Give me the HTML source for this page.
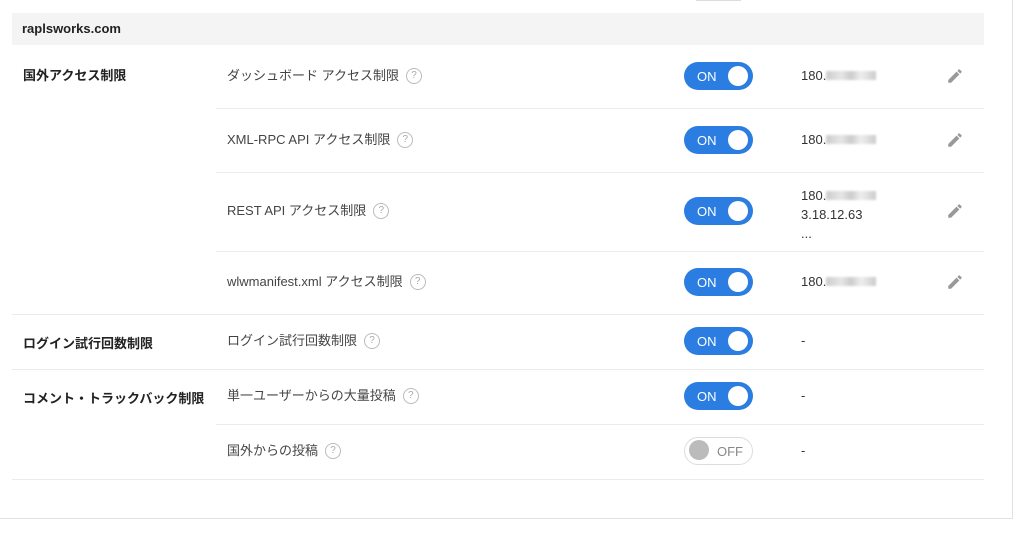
<!DOCTYPE html><html><head><meta charset="utf-8"><style>
body{margin:0;width:1024px;height:544px;background:#fff;font-family:"Liberation Sans","Noto Sans CJK JP",sans-serif;color:#333;position:relative;overflow:hidden}
.a{position:absolute}
.card{left:-2px;top:-2px;width:1014px;height:520px;border-right:1px solid #e2e2e2;border-bottom:1px solid #e2e2e2}
.hd{left:12px;top:13px;width:972px;height:32px;background:#f4f4f4;font-size:13px;font-weight:bold;line-height:32px;text-indent:10px;color:#222}
.ln{height:1px;background:#ebebeb}
.g{font-size:13px;font-weight:bold;left:23px;color:#222}
.l{font-size:13px;left:227px;color:#444;white-space:nowrap;line-height:18px}
.q{display:inline-block;width:14px;height:14px;border:1px solid #bbb;border-radius:50%;font-size:10px;line-height:14px;text-align:center;color:#aaa;margin-left:7px;vertical-align:middle;position:relative;top:-1px}
.t{left:684px;width:69px;height:28px;border-radius:14px;background:#2b7de1;color:#fff;font-size:13px}
.t span{position:absolute;left:13px;top:7px}
.t i{position:absolute;right:5px;top:4px;width:20px;height:20px;border-radius:50%;background:#fff}
.off{background:#fff;border:1px solid #ddd;width:67px;height:26px;color:#888}
.off i{left:4px;top:2px;background:#bbb}
.off span{left:32px;top:6px}
.ip{left:801px;font-size:13px;color:#333;white-space:nowrap}
.bl{display:inline-block;width:50px;height:9px;background:linear-gradient(90deg,#ccc,#e6e6e6 30%,#ccc 50%,#eee 70%,#ccc);filter:blur(1px);vertical-align:0}
.p{left:946px}
</style></head><body>
<div class="a card"></div>
<div class="a ln" style="left:696px;top:0;width:45px;background:#ddd"></div>
<div class="a hd">raplsworks.com</div>
<div class="a g" style="top:65px">国外アクセス制限</div>
<div class="a g" style="top:333px">ログイン試行回数制限</div>
<div class="a g" style="top:388px">コメント・トラックバック制限</div>

<div class="a l" style="top:67px">ダッシュボード アクセス制限<span class="q">?</span></div>
<div class="a l" style="top:131px">XML-RPC API アクセス制限<span class="q">?</span></div>
<div class="a l" style="top:202px">REST API アクセス制限<span class="q">?</span></div>
<div class="a l" style="top:273px">wlwmanifest.xml アクセス制限<span class="q">?</span></div>
<div class="a l" style="top:332px">ログイン試行回数制限<span class="q">?</span></div>
<div class="a l" style="top:387px">単一ユーザーからの大量投稿<span class="q">?</span></div>
<div class="a l" style="top:442px">国外からの投稿<span class="q">?</span></div>

<div class="a ln" style="left:216px;top:108px;width:768px"></div>
<div class="a ln" style="left:216px;top:172px;width:768px"></div>
<div class="a ln" style="left:216px;top:251px;width:768px"></div>
<div class="a ln" style="left:12px;top:314px;width:972px"></div>
<div class="a ln" style="left:12px;top:369px;width:972px"></div>
<div class="a ln" style="left:216px;top:424px;width:768px"></div>
<div class="a ln" style="left:12px;top:479px;width:972px"></div>

<div class="a t" style="top:62px"><span>ON</span><i></i></div>
<div class="a t" style="top:126px"><span>ON</span><i></i></div>
<div class="a t" style="top:197px"><span>ON</span><i></i></div>
<div class="a t" style="top:268px"><span>ON</span><i></i></div>
<div class="a t" style="top:327px"><span>ON</span><i></i></div>
<div class="a t" style="top:382px"><span>ON</span><i></i></div>
<div class="a t off" style="top:437px"><i></i><span>OFF</span></div>

<div class="a ip" style="top:68px">180.<span class="bl"></span></div>
<div class="a ip" style="top:132px">180.<span class="bl"></span></div>
<div class="a ip" style="top:186px;line-height:19px">180.<span class="bl"></span><br>3.18.12.63<br>...</div>
<div class="a ip" style="top:274px">180.<span class="bl"></span></div>
<div class="a ip" style="top:333px">-</div>
<div class="a ip" style="top:388px">-</div>
<div class="a ip" style="top:443px">-</div>

<svg class="a p" style="top:67px" width="18" height="18" viewBox="0 0 24 24"><path fill="#999" d="M3 17.25V21h3.75L17.81 9.94l-3.75-3.75L3 17.25zM20.71 7.04a1 1 0 0 0 0-1.41l-2.34-2.34a1 1 0 0 0-1.41 0l-1.830 1.83 3.75 3.75 1.83-1.83z"/></svg>
<svg class="a p" style="top:131px" width="18" height="18" viewBox="0 0 24 24"><path fill="#999" d="M3 17.25V21h3.75L17.81 9.94l-3.75-3.75L3 17.25zM20.71 7.04a1 1 0 0 0 0-1.41l-2.34-2.34a1 1 0 0 0-1.41 0l-1.83 1.83 3.75 3.75 1.83-1.83z"/></svg>
<svg class="a p" style="top:202px" width="18" height="18" viewBox="0 0 24 24"><path fill="#999" d="M3 17.25V21h3.75L17.81 9.94l-3.75-3.75L3 17.25zM20.71 7.04a1 1 0 0 0 0-1.41l-2.34-2.34a1 1 0 0 0-1.41 0l-1.83 1.83 3.75 3.75 1.83-1.83z"/></svg>
<svg class="a p" style="top:273px" width="18" height="18" viewBox="0 0 24 24"><path fill="#999" d="M3 17.25V21h3.75L17.81 9.94l-3.75-3.75L3 17.25zM20.71 7.04a1 1 0 0 0 0-1.41l-2.34-2.34a1 1 0 0 0-1.41 0l-1.83 1.83 3.75 3.75 1.83-1.83z"/></svg>
</body></html>
